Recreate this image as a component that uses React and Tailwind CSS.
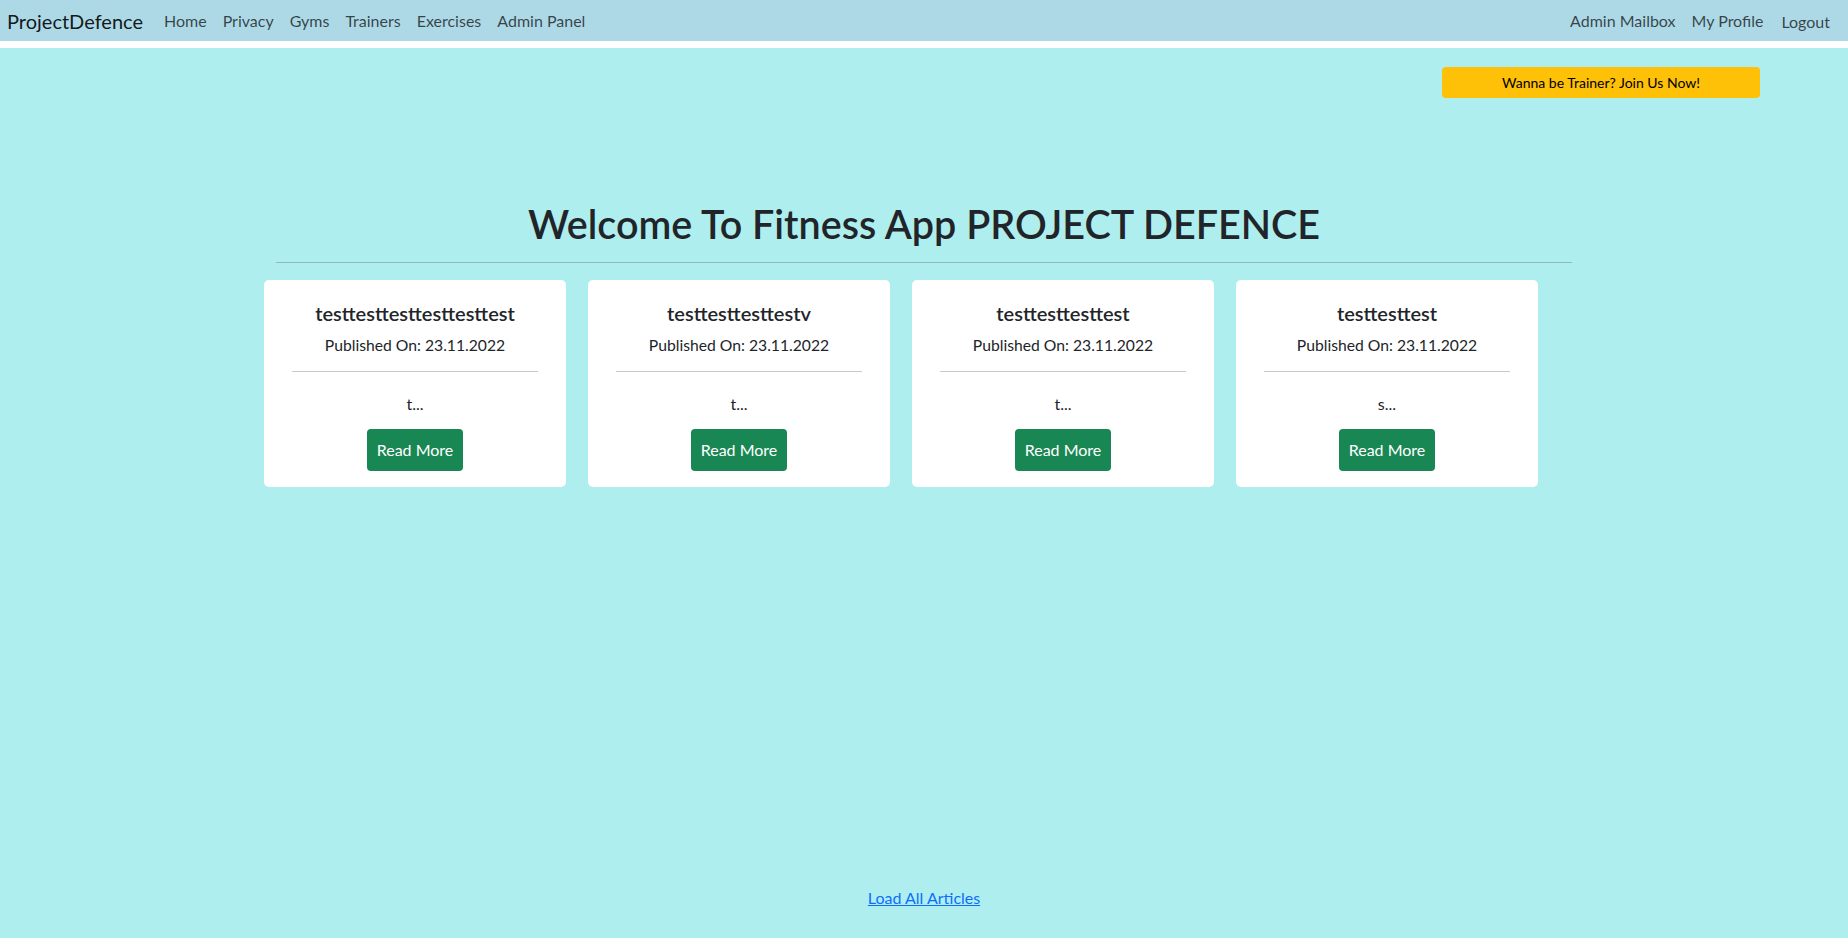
import React from "react";

const articles = [
  { title: "testtesttesttesttesttest", date: "23.11.2022", excerpt: "t..." },
  { title: "testtesttesttestv", date: "23.11.2022", excerpt: "t..." },
  { title: "testtesttesttest", date: "23.11.2022", excerpt: "t..." },
  { title: "testtesttest", date: "23.11.2022", excerpt: "s..." },
];

const leftLinks = ["Home", "Privacy", "Gyms", "Trainers", "Exercises", "Admin Panel"];

function ArticleCard({ article }) {
  return (
    <div className="w-[302px] h-[207px] bg-white rounded-[5px] flex flex-col items-center pt-[21px] text-[#212529]">
      <h5 className="text-[20px] leading-[24px] font-semibold">{article.title}</h5>
      <p className="mt-[8px] text-[15.7px] leading-[24px]">Published On: {article.date}</p>
      <hr className="mt-[14px] w-[246px] border-t border-[#c8c9ca]" />
      <p className="mt-[20px] text-[16px] leading-[24px]">{article.excerpt}</p>
      <button className="mt-[13px] h-[42px] w-[96px] rounded-[4px] bg-[#198754] text-white text-[16px]">
        Read More
      </button>
    </div>
  );
}

export default function App() {
  return (
    <div
      className="min-h-screen bg-[#afeeee] text-[#212529]"
      style={{ fontFamily: 'Lato, "Noto Sans", sans-serif' }}
    >
      <nav className="h-[41px] bg-[#add8e6] flex items-center justify-between pl-[7px] pr-[10px]">
        <div className="flex items-center">
          <a className="text-[20px] text-black/90 mr-[13px]">ProjectDefence</a>
          {leftLinks.map((l) => (
            <a key={l} className="px-[8px] text-[16px] text-black/70">
              {l}
            </a>
          ))}
        </div>
        <div className="flex items-center">
          <a className="px-[8px] text-[16px] text-black/70">Admin Mailbox</a>
          <a className="px-[8px] text-[16px] text-black/70">My Profile</a>
          <button className="ml-[2px] px-[8px] mt-[3px] text-[16px] text-black/70">Logout</button>
        </div>
      </nav>
      <div className="h-[7px] bg-white" />

      <main className="flex flex-col">
        <div className="flex justify-end pr-[88px] pt-[19px]">
          <button className="w-[318px] h-[31px] rounded-[4px] bg-[#ffc107] text-black text-[14px]">
            Wanna be Trainer? Join Us Now!
          </button>
        </div>

        <div className="w-[1320px] mx-auto">
          <h1 className="mt-[102px] text-center text-[39.5px] leading-[48px] font-semibold">
            Welcome To Fitness App PROJECT DEFENCE
          </h1>
          <hr className="mt-[14px] mx-[12px] border-t border-[#8bbcbc]" />
          <div className="mt-[17px] flex gap-[22px]">
            {articles.map((a) => (
              <ArticleCard key={a.title} article={a} />
            ))}
          </div>
        </div>

        <div className="mt-[399px] text-center">
          <a href="#" className="text-[16px] leading-[24px] text-[#0d6efd] underline">
            Load All Articles
          </a>
        </div>
      </main>
    </div>
  );
}
